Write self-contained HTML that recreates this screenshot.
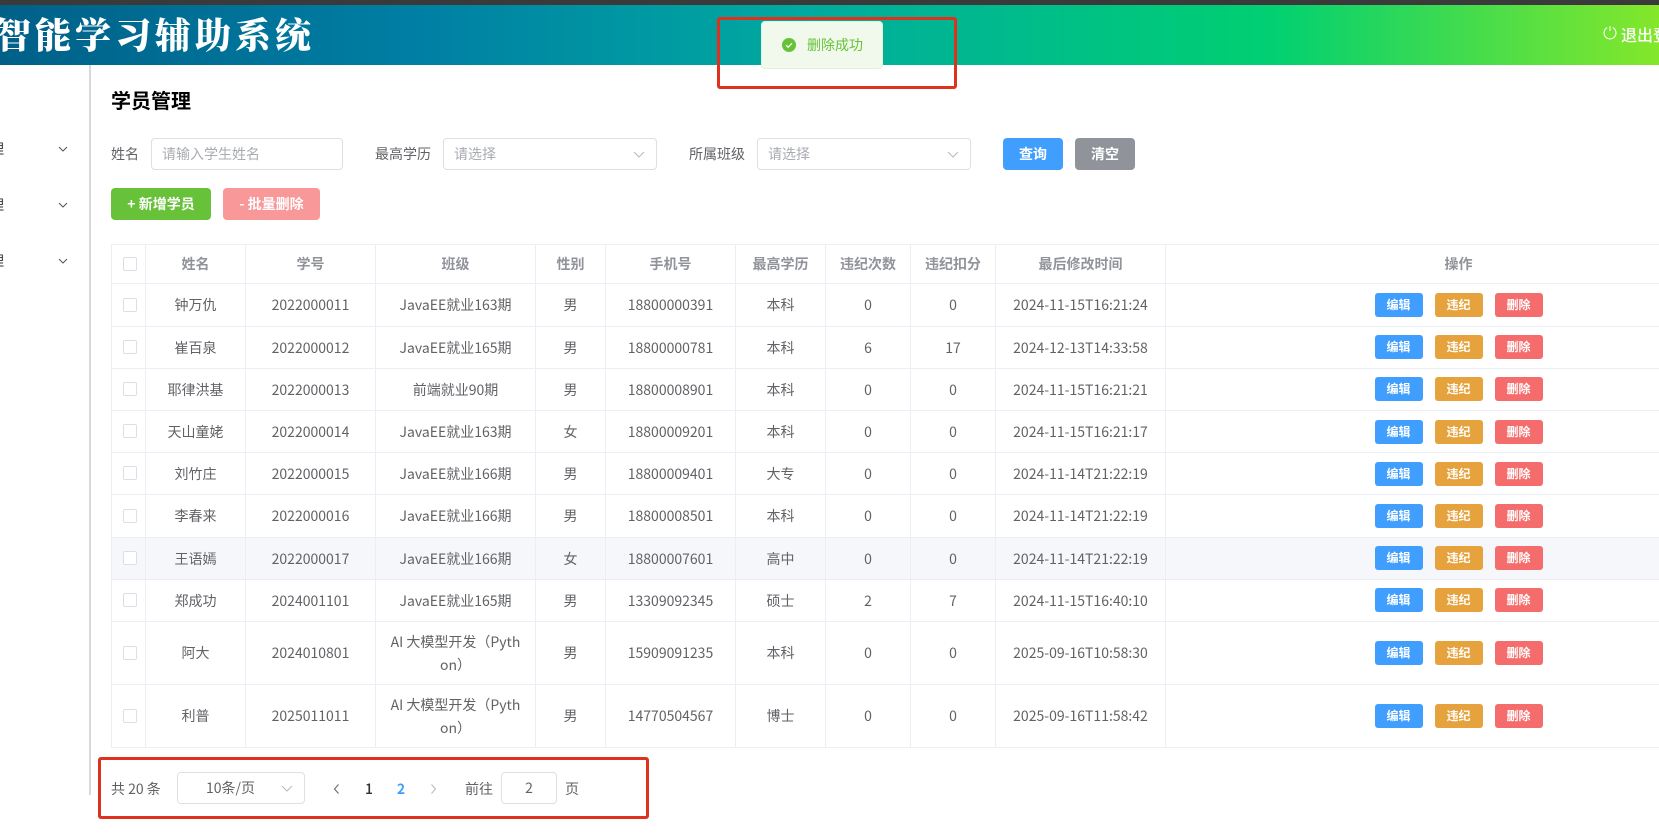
<!DOCTYPE html>
<html lang="zh">
<head>
<meta charset="utf-8">
<title>学员管理</title>
<style>
*{box-sizing:border-box}
html,body{margin:0;padding:0;width:1659px;height:840px;overflow:hidden;background:#fff;font-family:"Noto Sans CJK SC","Liberation Sans",sans-serif;font-size:14px;color:#606266}
.abs{position:absolute}
#top{left:0;top:0;width:1659px;height:5px;background:#3a3a3a}
#hdr{left:0;top:5px;width:1659px;height:60px;background:linear-gradient(to right,#006088 0,#007fa4 420px,#00aaa0 800px,#00d072 1270px,#84e72a 1659px);overflow:hidden}
#brand{left:-5px;top:5px;font-family:"Noto Serif CJK SC",serif;font-weight:900;font-size:36px;line-height:48px;letter-spacing:4px;color:#fff;white-space:nowrap}
#logout{left:1621px;top:17px;font-size:16px;line-height:24px;color:#fff;white-space:nowrap;font-weight:500}
#side{left:89px;top:65px;width:2px;height:730px;background:#d9d9d9}
.mi{left:-10px;width:14px;height:20px;line-height:20px;font-size:14px;color:#303133}
.h1{left:111px;top:86px;font-size:20px;line-height:28px;font-weight:700;color:#000}
.lb{line-height:32px;top:138px;color:#606266;white-space:nowrap}
.in{top:138px;height:32px;border:1px solid #dcdfe6;border-radius:4px;background:#fff;color:#a8abb2;line-height:30px;padding-left:10px}
.btn{border-radius:4px;color:#fff;text-align:center;font-weight:700;white-space:nowrap}
table{position:absolute;left:111px;top:244px;width:1640px;border-collapse:collapse;table-layout:fixed;background:#fff}
th,td{border:1px solid #ebeef5;text-align:center;padding:0;font-size:14px;line-height:23px;font-weight:400;color:#606266}
th{color:#909399;font-weight:700;height:39.4px}
td{height:42.2px;padding-top:2px}
tr.t td{height:63px}
tr.hv td{background:#f5f7fa}
.cb{display:inline-block;width:14px;height:14px;border:1px solid #dcdfe6;border-radius:2px;background:#fff;vertical-align:middle;position:relative;top:-1px;left:1px}
td .cb{top:-2px}
.b{display:inline-block;width:48px;height:24px;line-height:24px;border-radius:3px;color:#fff;font-size:12px;font-weight:700;vertical-align:middle;margin:0 6px;position:relative;top:-1px}
.b1{background:#409eff}.b2{background:#e6a23c}.b3{background:#f56c6c}
.red{border:3px solid #e0301e;border-radius:3px}
#toast{left:761px;top:21px;width:122px;height:48px;background:#f0f9eb;border:1px solid #e1f3d8;border-radius:4px}
#toast span{position:absolute;left:45px;top:12px;line-height:22px;color:#67c23a;white-space:nowrap}
</style>
</head>
<body>
<div class="abs" id="top"></div>
<div class="abs" id="hdr">
  <div class="abs" id="brand">智能学习辅助系统</div>
  <svg class="abs" style="left:1603px;top:20px" width="14" height="16" viewBox="0 0 14 16" fill="none" stroke="#fff" stroke-width="1.1"><path d="M4.2 2.6A6 6 0 1 0 9.8 2.6"/><path d="M7 1V6"/></svg>
  <div class="abs" id="logout">退出登录</div>
</div>

<div class="abs" id="side"></div>
<div class="abs mi" style="top:139px">理</div>
<div class="abs mi" style="top:195px">理</div>
<div class="abs mi" style="top:251px">理</div>
<svg class="abs" style="left:58px;top:146px" width="10" height="6" viewBox="0 0 10 6" fill="none" stroke="#555" stroke-width="1"><path d="M1 1l4 4 4-4"/></svg>
<svg class="abs" style="left:58px;top:202px" width="10" height="6" viewBox="0 0 10 6" fill="none" stroke="#555" stroke-width="1"><path d="M1 1l4 4 4-4"/></svg>
<svg class="abs" style="left:58px;top:258px" width="10" height="6" viewBox="0 0 10 6" fill="none" stroke="#555" stroke-width="1"><path d="M1 1l4 4 4-4"/></svg>

<div class="abs h1">学员管理</div>

<div class="abs lb" style="left:111px">姓名</div>
<div class="abs in" style="left:151px;width:192px">请输入学生姓名</div>
<div class="abs lb" style="left:375px">最高学历</div>
<div class="abs in" style="left:443px;width:214px">请选择
  <svg class="abs" style="right:11px;top:12px" width="12" height="7" viewBox="0 0 12 7" fill="none" stroke="#b4b7be" stroke-width="1"><path d="M1 1l5 5 5-5"/></svg></div>
<div class="abs lb" style="left:689px">所属班级</div>
<div class="abs in" style="left:757px;width:214px">请选择
  <svg class="abs" style="right:11px;top:12px" width="12" height="7" viewBox="0 0 12 7" fill="none" stroke="#b4b7be" stroke-width="1"><path d="M1 1l5 5 5-5"/></svg></div>
<div class="abs btn" style="left:1003px;top:138px;width:60px;height:32px;line-height:32px;background:#409eff">查询</div>
<div class="abs btn" style="left:1075px;top:138px;width:60px;height:32px;line-height:32px;background:#909399">清空</div>
<div class="abs btn" style="left:111px;top:188px;width:100px;height:32px;line-height:32px;background:#67c23a">+ 新增学员</div>
<div class="abs btn" style="left:223px;top:188px;width:97px;height:32px;line-height:32px;background:#f89898">- 批量删除</div>

<table>
<colgroup><col style="width:34px"><col style="width:100px"><col style="width:130px"><col style="width:160px"><col style="width:70px"><col style="width:130px"><col style="width:90px"><col style="width:85px"><col style="width:85px"><col style="width:170px"><col style="width:586px"></colgroup>
<tr><th><i class="cb"></i></th><th>姓名</th><th>学号</th><th>班级</th><th>性别</th><th>手机号</th><th>最高学历</th><th>违纪次数</th><th>违纪扣分</th><th>最后修改时间</th><th>操作</th></tr>
<tr><td><i class="cb"></i></td><td>钟万仇</td><td>2022000011</td><td>JavaEE就业163期</td><td>男</td><td>18800000391</td><td>本科</td><td>0</td><td>0</td><td>2024-11-15T16:21:24</td><td><span class="b b1">编辑</span><span class="b b2">违纪</span><span class="b b3">删除</span></td></tr>
<tr><td><i class="cb"></i></td><td>崔百泉</td><td>2022000012</td><td>JavaEE就业165期</td><td>男</td><td>18800000781</td><td>本科</td><td>6</td><td>17</td><td>2024-12-13T14:33:58</td><td><span class="b b1">编辑</span><span class="b b2">违纪</span><span class="b b3">删除</span></td></tr>
<tr><td><i class="cb"></i></td><td>耶律洪基</td><td>2022000013</td><td>前端就业90期</td><td>男</td><td>18800008901</td><td>本科</td><td>0</td><td>0</td><td>2024-11-15T16:21:21</td><td><span class="b b1">编辑</span><span class="b b2">违纪</span><span class="b b3">删除</span></td></tr>
<tr><td><i class="cb"></i></td><td>天山童姥</td><td>2022000014</td><td>JavaEE就业163期</td><td>女</td><td>18800009201</td><td>本科</td><td>0</td><td>0</td><td>2024-11-15T16:21:17</td><td><span class="b b1">编辑</span><span class="b b2">违纪</span><span class="b b3">删除</span></td></tr>
<tr><td><i class="cb"></i></td><td>刘竹庄</td><td>2022000015</td><td>JavaEE就业166期</td><td>男</td><td>18800009401</td><td>大专</td><td>0</td><td>0</td><td>2024-11-14T21:22:19</td><td><span class="b b1">编辑</span><span class="b b2">违纪</span><span class="b b3">删除</span></td></tr>
<tr><td><i class="cb"></i></td><td>李春来</td><td>2022000016</td><td>JavaEE就业166期</td><td>男</td><td>18800008501</td><td>本科</td><td>0</td><td>0</td><td>2024-11-14T21:22:19</td><td><span class="b b1">编辑</span><span class="b b2">违纪</span><span class="b b3">删除</span></td></tr>
<tr class="hv"><td><i class="cb"></i></td><td>王语嫣</td><td>2022000017</td><td>JavaEE就业166期</td><td>女</td><td>18800007601</td><td>高中</td><td>0</td><td>0</td><td>2024-11-14T21:22:19</td><td><span class="b b1">编辑</span><span class="b b2">违纪</span><span class="b b3">删除</span></td></tr>
<tr><td><i class="cb"></i></td><td>郑成功</td><td>2024001101</td><td>JavaEE就业165期</td><td>男</td><td>13309092345</td><td>硕士</td><td>2</td><td>7</td><td>2024-11-15T16:40:10</td><td><span class="b b1">编辑</span><span class="b b2">违纪</span><span class="b b3">删除</span></td></tr>
<tr class="t"><td><i class="cb"></i></td><td>阿大</td><td>2024010801</td><td>AI 大模型开发（Pyth<br>on）</td><td>男</td><td>15909091235</td><td>本科</td><td>0</td><td>0</td><td>2025-09-16T10:58:30</td><td><span class="b b1">编辑</span><span class="b b2">违纪</span><span class="b b3">删除</span></td></tr>
<tr class="t"><td><i class="cb"></i></td><td>利普</td><td>2025011011</td><td>AI 大模型开发（Pyth<br>on）</td><td>男</td><td>14770504567</td><td>博士</td><td>0</td><td>0</td><td>2025-09-16T11:58:42</td><td><span class="b b1">编辑</span><span class="b b2">违纪</span><span class="b b3">删除</span></td></tr>
</table>

<div class="abs" style="left:111px;top:777px;line-height:24px;white-space:nowrap">共 20 条</div>
<div class="abs in" style="left:177px;top:772px;width:128px;color:#606266;padding-left:28px;line-height:30px">10条/页
  <svg class="abs" style="right:11px;top:12px" width="12" height="7" viewBox="0 0 12 7" fill="none" stroke="#b4b7be" stroke-width="1"><path d="M1 1l5 5 5-5"/></svg></div>
<svg class="abs" style="left:333px;top:784px" width="7" height="10" viewBox="0 0 7 10" fill="none" stroke="#606266" stroke-width="1"><path d="M5.5 0.5L1.5 5l4 4.5"/></svg>
<div class="abs" style="left:360px;width:18px;top:777px;line-height:24px;text-align:center;color:#303133;font-weight:500">1</div>
<div class="abs" style="left:392px;width:18px;top:777px;line-height:24px;text-align:center;color:#409eff;font-weight:700">2</div>
<svg class="abs" style="left:430px;top:784px" width="7" height="10" viewBox="0 0 7 10" fill="none" stroke="#b4b7be" stroke-width="1"><path d="M1.5 0.5L5.5 5l-4 4.5"/></svg>
<div class="abs" style="left:465px;top:777px;line-height:24px;white-space:nowrap">前往</div>
<div class="abs in" style="left:501px;top:772px;width:56px;color:#606266;padding:0;text-align:center">2</div>
<div class="abs" style="left:565px;top:777px;line-height:24px">页</div>

<div class="abs" id="toast">
  <svg class="abs" style="left:20px;top:16px" width="14" height="14" viewBox="0 0 14 14"><circle cx="7" cy="7" r="7" fill="#67c23a"/><path d="M4 7.2l2.1 2.1L10 5.2" fill="none" stroke="#fff" stroke-width="1.2"/></svg>
  <span>删除成功</span>
</div>
<div class="abs red" style="left:717px;top:17px;width:240px;height:72px"></div>
<div class="abs red" style="left:98px;top:757px;width:551px;height:62px"></div>
</body>
</html>
